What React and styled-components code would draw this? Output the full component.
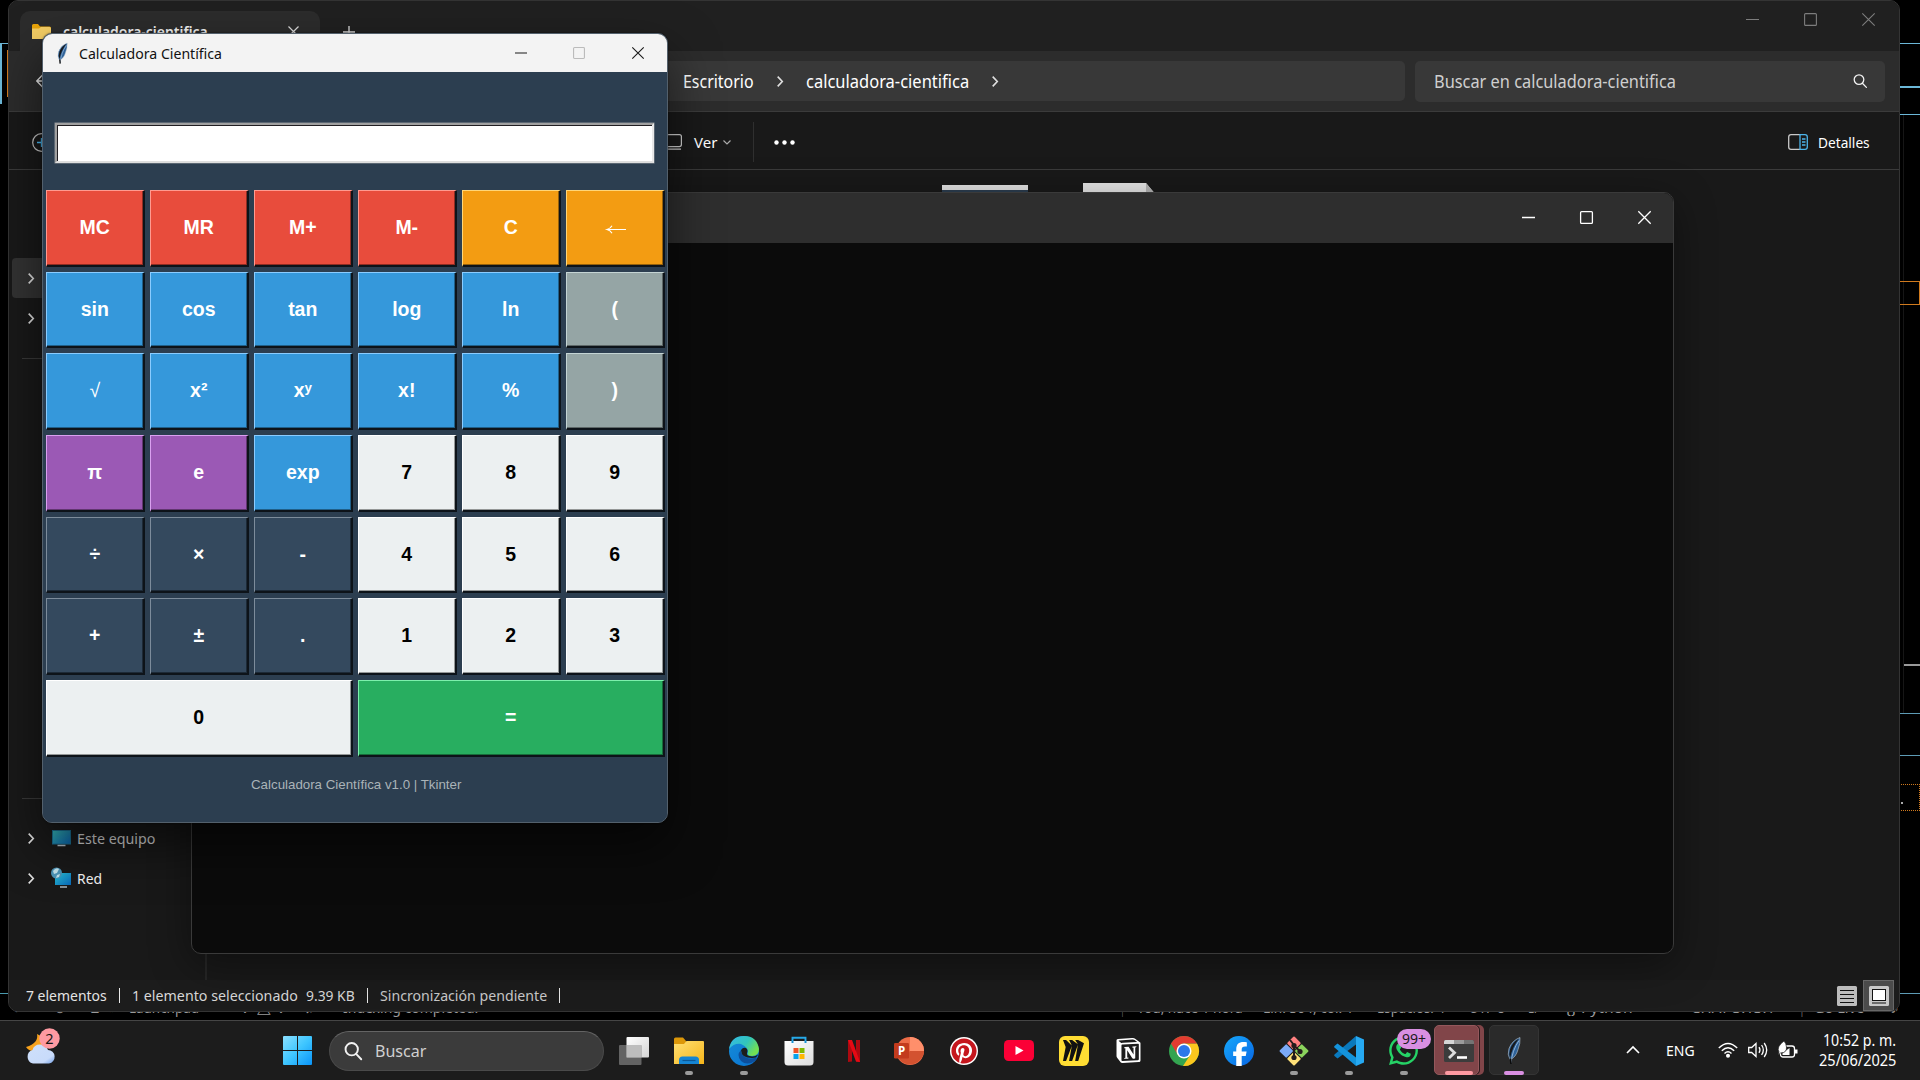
import React, { useLayoutEffect, useRef } from "react";
import styled, { createGlobalStyle } from "styled-components";
import { FaWhatsapp, FaPinterest, FaFacebookF } from "react-icons/fa6";
import { SiMiro, SiNotion } from "react-icons/si";

const Global = createGlobalStyle`
  * { box-sizing: border-box; }
  html, body { margin: 0; background: #000; overflow: hidden; }
  body { font-family: "Noto Sans", "Open Sans", sans-serif; }
  svg { display: block; overflow: visible; }
`;

const Desktop = styled.div`
  position: relative;
  width: 1920px;
  height: 1080px;
  background: #000;
  overflow: hidden;
`;

/* ---------- text with a fixed advance width ---------- */
const FitBox = styled.span`
  display: block;
  flex: none;
  width: ${(p) => p.$w}px;
  font-size: ${(p) => p.$size}px;
  font-weight: ${(p) => p.$weight || 400};
  font-family: ${(p) => p.$font || "inherit"};
  color: ${(p) => p.$color || "#fff"};
  line-height: 20px;
  white-space: nowrap;
`;
const FitInner = styled.span`
  display: inline-block;
  transform-origin: 0 50%;
`;
function Fit({ w, size = 15, weight, color, font, className, children }) {
  const ref = useRef(null);
  useLayoutEffect(() => {
    const el = ref.current;
    if (el && el.offsetWidth) el.style.transform = `scaleX(${w / el.offsetWidth})`;
  }, [w]);
  return (
    <FitBox className={className} $w={w} $size={size} $weight={weight} $color={color} $font={font}>
      <FitInner ref={ref}>{children}</FitInner>
    </FitBox>
  );
}

/* ---------- editor behind the windows ---------- */
const Trace = styled.i`
  position: absolute;
  left: ${(p) => p.$x}px;
  top: ${(p) => p.$y}px;
  width: ${(p) => p.$w}px;
  height: ${(p) => p.$h}px;
  background: ${(p) => p.$c};
`;
const Frame = styled.i`
  position: absolute;
  left: ${(p) => p.$x}px;
  top: ${(p) => p.$y}px;
  width: ${(p) => p.$w}px;
  height: ${(p) => p.$h}px;
  border: 1px ${(p) => p.$line} #d07a1e;
`;
const EditorBar = styled.div`
  position: absolute;
  left: 0;
  top: 998px;
  width: 1920px;
  height: 22px;
  display: flex;
  align-items: flex-start;
`;
const EditorItem = styled.div`
  margin-left: ${(p) => p.$gap}px;
`;
const editorItems = [
  [14, 8, "›"], [32, 12, "⊛"], [24, 10, "⊔"], [9, 6, "»"], [14, 70, "Launchpad"],
  [26, 11, "○"], [7, 4, "0"], [10, 14, "△"], [8, 4, "0"], [22, 9, "♫"], [29, 135, "Indexing completed."],
  [643, 3, "|"], [13, 106, "You, hace 1 hora"], [20, 91, "Lín. 304, col. 1"], [23, 68, "Espacios: 4"],
  [24, 36, "UTF-8"], [23, 12, "LF"], [25, 68, "{} Python"], [22, 16, "○"], [20, 84, "CHAT 3.13.1"],
  [25, 4, "|"], [10, 50, "Go Live"], [26, 9, "♪"],
];

/* ---------- window shells ---------- */
const Window = styled.section`
  position: absolute;
  left: ${(p) => p.$x}px;
  top: ${(p) => p.$y}px;
  width: ${(p) => p.$w}px;
  height: ${(p) => p.$h}px;
  display: flex;
  flex-direction: column;
  overflow: hidden;
  border: 1px solid ${(p) => p.$line};
  border-radius: 10px;
  background: ${(p) => p.$bg};
  box-shadow: ${(p) => p.$shadow || "none"};
`;
const Controls = styled.div`
  display: flex;
  margin-left: auto;
  margin-right: ${(p) => p.$mr || 0}px;
  color: ${(p) => p.$c};
`;
const Control = styled.div`
  width: ${(p) => p.$w || 58}px;
  height: ${(p) => p.$h}px;
  display: grid;
  place-items: center;
  opacity: ${(p) => (p.$dim ? 0.25 : 1)};
`;
function WindowControls({ color, h, w, size, sw, dimMax, mr }) {
  const s = { fill: "none", stroke: "currentColor", strokeWidth: sw };
  return (
    <Controls $c={color} $mr={mr}>
      <Control $h={h} $w={w}><svg width={size} height={size} viewBox="0 0 13 13"><path d="M0 6.5h13" {...s} /></svg></Control>
      <Control $h={h} $w={w} $dim={dimMax}><svg width={size} height={size} viewBox="0 0 13 13"><rect x=".6" y=".6" width="11.8" height="11.8" rx="1" {...s} /></svg></Control>
      <Control $h={h} $w={w}><svg width={size} height={size} viewBox="0 0 13 13"><path d="M.3.3l12.4 12.4M12.7.3.3 12.7" {...s} /></svg></Control>
    </Controls>
  );
}

/* ---------- explorer ---------- */
const TabStrip = styled.header`
  flex: none;
  height: 50px;
  display: flex;
  background: #202020;
  padding-left: 11px;
`;
const Tab = styled.div`
  width: 300px;
  height: 40px;
  margin-top: 10px;
  padding: 0 0 0 12px;
  display: flex;
  align-items: center;
  background: #2c2c2c;
  border-radius: 10px 10px 0 0;
  & > svg:first-child { margin-right: 12px; }
  & > svg:last-child { margin-left: 80px; }
`;
const NewTab = styled.div`
  padding: 25px 0 0 23px;
`;
const AddressRow = styled.div`
  flex: none;
  height: 61px;
  display: flex;
  align-items: center;
  background: #2c2c2c;
  border-bottom: 1px solid #3b3b3b;
  padding: 0 14px 0 27px;
`;
const AddressField = styled.div`
  margin-left: 139px;
  width: 1216px;
  height: 40px;
  display: flex;
  align-items: center;
  gap: 23px;
  padding-left: 494px;
  background: #383838;
  border-radius: 5px;
`;
const SearchField = styled.div`
  margin-left: auto;
  width: 470px;
  height: 41px;
  display: flex;
  align-items: center;
  justify-content: space-between;
  padding: 0 18px 0 19px;
  background: #383838;
  border-radius: 5px;
`;
const CommandBar = styled.div`
  flex: none;
  height: 58px;
  display: flex;
  align-items: center;
  background: #191919;
  border-bottom: 1px solid #3b3b3b;
  padding: 3px 29px 0 23px;
`;
const ViewButton = styled.div`
  margin-left: 609px;
  display: flex;
  align-items: center;
  & > svg:first-child { margin-right: 12px; }
  & > svg:last-child { margin: 0 2px 0 6px; }
`;
const BarLine = styled.i`
  width: 1px;
  height: 40px;
  margin: 0 20px 0 20px;
  background: #2f2f2f;
`;
const DetailsButton = styled.div`
  margin-left: auto;
  display: flex;
  align-items: center;
  gap: 10px;
`;
const ExplorerBody = styled.div`
  flex: 1;
  min-height: 0;
  display: flex;
`;
const Sidebar = styled.nav`
  flex: none;
  width: 198px;
  padding: 88px 0 0 3px;
  display: flex;
  flex-direction: column;
  border-right: 2px solid #262626;
  background: #191919;
`;
const NavRow = styled.div`
  flex: none;
  height: 40px;
  display: flex;
  align-items: center;
  padding-left: 16px;
  border-radius: 4px;
  background: ${(p) => (p.$on ? "#333" : "transparent")};
  & > svg:nth-child(2) { margin: 0 6px 0 18px; }
  & > span { margin-top: -1px; }
`;
const NavLine = styled.i`
  flex: none;
  height: 1px;
  margin: ${(p) => p.$m};
  background: #393939;
`;
const Files = styled.div`
  flex: 1;
  display: flex;
  align-items: flex-start;
  padding: 13px 0 0 735px;
  gap: 54px;
`;
const Preview = styled.div`
  width: 86px;
  height: 60px;
  margin: 2px 1px 0 0;
  border-top: 5px solid #e3e3e3;
  background: #2c3e50;
`;
const StatusBar = styled.footer`
  flex: none;
  height: 31px;
  display: flex;
  align-items: center;
  padding: 0 5px 0 17px;
  background: #1c1c1c;
  & > span { margin-top: -2px; }
`;
const StatusLine = styled.i`
  width: 1px;
  height: 15px;
  margin: 0 12px;
  background: #e8e8e8;
`;
const StatusGap = styled.i`
  width: 8px;
`;
const ViewModes = styled.div`
  margin-left: auto;
  display: flex;
  align-items: center;
  gap: 6px;
`;
const ActiveMode = styled.div`
  width: 31px;
  height: 31px;
  display: grid;
  place-items: center;
  background: #4b4b4b;
  border: 1px solid #686868;
`;

const Chevron = ({ w = 6, h = 11, c = "#e0e0e0", sw = 1.6 }) => (
  <svg width={w} height={h} viewBox="0 0 6 11"><path d="M.7.6l4.6 4.9L.7 10.4" fill="none" stroke={c} strokeWidth={sw} /></svg>
);
const Magnifier = ({ size, sw = 1.3, c = "#f2f2f2" }) => (
  <svg width={size} height={size} viewBox="0 0 14 14" fill="none" stroke={c} strokeWidth={sw} strokeLinecap="round">
    <circle cx="6" cy="5.6" r="4.8" /><path d="M9.4 9.2l4 4.2" />
  </svg>
);

function Explorer() {
  return (
    <Window $x={8} $y={0} $w={1892} $h={1012} $line="#343434" $bg="#191919">
      <TabStrip>
        <Tab>
          <svg width="19" height="15" viewBox="0 0 19 15"><path d="M0 1.5Q0 0 1.5 0H6l2 2.5h9.500q1.500 0 1.500 1.500V7H0z" fill="#eaa50a" /><path d="M0 4.500h7l2-1.500h8.500Q19 3 19 4.500V15H0z" fill="#f6cf65" /></svg>
          <Fit w={145} size={15} weight={600} color="#f4f4f4">calculadora-cientifica</Fit>
          <svg width="11" height="11" viewBox="0 0 11 11"><path d="M.5.5l10 10M10.500.5l-10 10" stroke="#ddd" strokeWidth="1.200" /></svg>
        </Tab>
        <NewTab><svg width="12" height="12" viewBox="0 0 12 12"><path d="M0 6h12M6 0v12" stroke="#ddd" strokeWidth="1.300" /></svg></NewTab>
        <WindowControls color="#7d7d7d" h={36} size={13} sw={1.1} mr={2} />
      </TabStrip>
      <AddressRow>
        <svg width="14" height="14" viewBox="0 0 14 14"><path d="M7 .5.7 7 7 13.500M.7 7H14" fill="none" stroke="#e6e6e6" strokeWidth="1.300" /></svg>
        <AddressField>
          <Fit w={71} size={17.5}>Escritorio</Fit>
          <Chevron />
          <Fit w={163} size={17.5}>calculadora-cientifica</Fit>
          <Chevron />
        </AddressField>
        <SearchField>
          <Fit w={242} size={17.5} color="#cfcfcf">Buscar en calculadora-cientifica</Fit>
          <Magnifier size={14} />
        </SearchField>
      </AddressRow>
      <CommandBar>
        <svg width="19" height="19" viewBox="0 0 19 19" fill="none"><circle cx="9.500" cy="9.500" r="8.800" stroke="#c8c8c8" strokeWidth="1.200" /><path d="M5 9.500h9M9.500 5v9" stroke="#4cc2ff" strokeWidth="1.300" /></svg>
        <ViewButton>
          <svg width="22" height="16" viewBox="0 0 22 16" fill="none" stroke="#cfcfcf" strokeWidth="1.200"><rect x=".6" y=".6" width="20.800" height="12" rx="2" /><path d="M2 15.200h19" /></svg>
          <Fit w={23} size={15}>Ver</Fit>
          <svg width="8" height="5" viewBox="0 0 8 5"><path d="M.5.5 4 4 7.500.5" fill="none" stroke="#aaa" strokeWidth="1.200" /></svg>
        </ViewButton>
        <BarLine />
        <svg width="22" height="5" viewBox="0 0 22 5" fill="#fff"><circle cx="2.500" cy="2.500" r="2.200" /><circle cx="10.500" cy="2.500" r="2.200" /><circle cx="18.500" cy="2.500" r="2.200" /></svg>
        <DetailsButton>
          <svg width="20" height="16" viewBox="0 0 20 16" fill="none" strokeWidth="1.300"><path d="M12 .7H3Q.7.7.7 3v10Q.7 15.300 3 15.300h9" stroke="#c9c9c9" /><path d="M12 .7h5q2.300 0 2.300 2.300v10q0 2.300-2.300 2.300h-5z" stroke="#4cb4ea" /><path d="M14 5h3.500M14 8h3.500M14 11h3.500" stroke="#4cb4ea" /></svg>
          <Fit w={52} size={15}>Detalles</Fit>
        </DetailsButton>
      </CommandBar>
      <ExplorerBody>
        <Sidebar>
          <NavRow $on><Chevron /></NavRow>
          <NavRow><Chevron /></NavRow>
          <NavLine $m="20px 0 0 10px" />
          <NavLine $m="439px 0 19px 10px" />
          <NavRow>
            <Chevron />
            <svg width="19" height="17" viewBox="0 0 19 17"><defs><linearGradient id="pc" x2="1" y2="1"><stop stopColor="#35b5b5" /><stop offset="1" stopColor="#0a62ad" /></linearGradient></defs><rect x=".5" y=".5" width="18" height="13.500" fill="url(#pc)" stroke="#1a6c8f" /><path d="M5.500 15.500h8" stroke="#aebac2" strokeWidth="1.500" /></svg>
            <Fit w={78} size={15} color="#d6d6d6">Este equipo</Fit>
          </NavRow>
          <NavRow>
            <Chevron />
            <svg width="19" height="20" viewBox="0 0 19 20"><defs><linearGradient id="net" x2="1" y2="1"><stop stopColor="#29c2d5" /><stop offset="1" stopColor="#0868bb" /></linearGradient></defs><rect x="3" y="5" width="16" height="12" fill="url(#net)" /><path d="M8 19h7" stroke="#aebac2" strokeWidth="1.500" /><circle cx="4.500" cy="5" r="5.500" fill="#4c95b9" /><path d="M1 3q3-4 6-2L5 5 2 6zM5 7l3-1-1 3-3 1z" fill="#c4e4ee" /></svg>
            <Fit w={25} size={15} color="#f4f4f4">Red</Fit>
          </NavRow>
        </Sidebar>
        <Files>
          <Preview />
          <svg width="73" height="60" viewBox="0 0 73 60"><path d="M0 0h63l10 12v48H0z" fill="#e6e6e6" /><path d="M63 0l10 12H63z" fill="#b5b5b5" /></svg>
        </Files>
      </ExplorerBody>
      <StatusBar>
        <Fit w={81} size={15} color="#e4e4e4">7 elementos</Fit>
        <StatusLine />
        <Fit w={166} size={15} color="#d8d8d8">1 elemento seleccionado</Fit>
        <StatusGap />
        <Fit w={49} size={15} color="#d8d8d8">9.39 KB</Fit>
        <StatusLine />
        <Fit w={167} size={15} color="#c9c9c9">Sincronización pendiente</Fit>
        <StatusLine />
        <ViewModes>
          <svg width="20" height="20" viewBox="0 0 20 20"><rect width="20" height="20" rx="1.500" fill="#bdbdbd" /><path d="M3 4.500h14M3 8.500h14M3 12.500h14M3 16.500h14" stroke="#111" /></svg>
          <ActiveMode><svg width="20" height="20" viewBox="0 0 20 20"><rect width="20" height="20" rx="1.500" fill="#c8c8c8" /><rect x="3.500" y="3.500" width="13" height="11" fill="#fff" stroke="#111" /><path d="M3 17h14" stroke="#111" /></svg></ActiveMode>
        </ViewModes>
      </StatusBar>
    </Window>
  );
}

/* ---------- terminal ---------- */
const TerminalBar = styled.header`
  flex: none;
  height: 50px;
  display: flex;
  background: #2e2e2e;
`;

/* ---------- calculator ---------- */
const CalcBar = styled.header`
  flex: none;
  height: 38px;
  display: flex;
  align-items: center;
  background: #f3f3f3;
  padding-left: 14px;
  & > svg { margin-right: 11px; }
  & > span { margin-top: -1px; }
`;
const CalcBody = styled.div`
  flex: 1;
  display: flex;
  flex-direction: column;
  padding: 51px 2px 0 3px;
  background: #2c3e50;
`;
const Entry = styled.div`
  flex: none;
  height: 40px;
  margin: 0 11px 27px 9px;
  background: #fff;
  border: 2px solid;
  border-color: #a0a0a0 #e8e8e8 #dedede #a0a0a0;
  box-shadow: inset 1px 1px 0 #201e22, 0 0 0 .5px #8a8f95;
`;
const Keys = styled.div`
  display: grid;
  grid-template-columns: repeat(6, 98.500px);
  grid-auto-rows: 76.500px;
  column-gap: 5.500px;
  row-gap: 5.200px;
`;
const tones = {
  red: ["#e84c3c", "#ff9a90", "#8e2c22", "#fff"],
  orange: ["#f39c12", "#ffd678", "#94600b", "#fff"],
  blue: ["#3598db", "#8accff", "#205f88", "#fff"],
  gray: ["#95a5a5", "#c4d4d4", "#5d6767", "#fff"],
  violet: ["#9b59b5", "#daa0f0", "#613670", "#fff"],
  navy: ["#34495e", "#7d8c9b", "#1d2a37", "#fff"],
  white: ["#ecf0f1", "#ffffff", "#949797", "#000"],
  green: ["#28ae60", "#7df0ac", "#186c3b", "#fff"],
};
const Key = styled.button`
  grid-column: span ${(p) => p.$span || 1};
  padding: 0;
  border: solid;
  border-width: 1px 2px 2px 1px;
  border-color: ${(p) => tones[p.$t][1]} #0d1319 #0d1319 ${(p) => tones[p.$t][1]};
  box-shadow: inset -1px -1px 0 ${(p) => tones[p.$t][2]};
  background: ${(p) => tones[p.$t][0]};
  color: ${(p) => tones[p.$t][3]};
  font: ${(p) => (p.$thin ? 400 : 700)} 19.5px/1 "Liberation Sans", "DejaVu Sans", sans-serif;
`;
const Arrow = () => (
  <svg width="20" height="9" viewBox="0 0 20 9"><path d="M20 4.500H1.500M6 .8Q4.500 3.500 1 4.500q3.500 1 5 3.700" fill="none" stroke="#fff" strokeWidth="1.200" /></svg>
);
const ArrowSpot = styled.span`
  display: flex;
  justify-content: center;
  padding: 3px 0 0 2px;
`;
const keys = [
  ["MC", "red"], ["MR", "red"], ["M+", "red"], ["M-", "red"], ["C", "orange"], ["←", "orange"],
  ["sin", "blue"], ["cos", "blue"], ["tan", "blue"], ["log", "blue"], ["ln", "blue"], ["(", "gray"],
  ["√", "blue", 1, true], ["x²", "blue"], ["xʸ", "blue"], ["x!", "blue"], ["%", "blue"], [")", "gray"],
  ["π", "violet"], ["e", "violet"], ["exp", "blue"], ["7", "white"], ["8", "white"], ["9", "white"],
  ["÷", "navy"], ["×", "navy"], ["-", "navy"], ["4", "white"], ["5", "white"], ["6", "white"],
  ["+", "navy"], ["±", "navy"], [".", "navy"], ["1", "white"], ["2", "white"], ["3", "white"],
  ["0", "white", 3], ["=", "green", 3],
];
const Credit = styled.div`
  display: flex;
  justify-content: center;
  margin-top: 18px;
`;
const Feather = ({ w, h }) => (
  <svg width={w} height={h} viewBox="0 0 14 27">
    <path d="M13 0Q5 3 2 11 0 17 3 22 9 20 11 12 13.500 6 13 0z" fill="#2f6298" stroke="#b7c4d0" strokeWidth=".6" />
    <path d="M12 1Q5 5 3 12 1.500 17 3 21 5 10 12 1z" fill="#17191c" />
    <path d="M12 3Q5 13 4 26" fill="none" stroke="#a9c8e8" strokeWidth=".8" />
    <path d="M3.500 21l.5 5.500" stroke="#090909" strokeWidth="1.700" />
  </svg>
);
function Calculator() {
  return (
    <Window $x={42} $y={33} $w={626} $h={790} $line="#53606c" $bg="#2c3e50" $shadow="0 0 2px rgba(0,0,0,.6), 0 22px 50px rgba(0,0,0,.55)">
      <CalcBar>
        <Feather w={11} h={21} />
        <Fit w={143} size={15} color="#111">Calculadora Científica</Fit>
        <WindowControls color="#1a1a1a" h={38} w={58.5} size={12} sw={1.2} dimMax />
      </CalcBar>
      <CalcBody>
        <Entry />
        <Keys>
          {keys.map(([k, t, span, thin]) => (
            <Key key={k} $t={t} $span={span} $thin={thin}>{k === "←" ? <ArrowSpot><Arrow /></ArrowSpot> : k}</Key>
          ))}
        </Keys>
        <Credit><Fit w={210} size={13.5} font='"Liberation Sans", sans-serif' color="#aab3b8">Calculadora Científica v1.0 | Tkinter</Fit></Credit>
      </CalcBody>
    </Window>
  );
}

/* ---------- taskbar ---------- */
const Taskbar = styled.footer`
  position: absolute;
  left: 0;
  bottom: 0;
  width: 1920px;
  height: 60px;
  display: flex;
  align-items: center;
  background: #1c1c1c;
  border-top: 1px solid #454545;
`;
const Widgets = styled.div`
  width: 283px;
  padding: 0 0 9px 26px;
`;
const SearchPill = styled.div`
  width: 275px;
  height: 40px;
  margin: 0 2px 0 17px;
  display: flex;
  align-items: center;
  gap: 13px;
  padding-left: 14px;
  border-radius: 20px;
  background: #3b3b3b;
  border: 1px solid #4a4a4a;
  border-top-color: #646464;
`;
const Slot = styled.div`
  position: relative;
  width: 55px;
  height: 59px;
  display: grid;
  place-items: center;
`;
const Tile = styled.div`
  position: absolute;
  inset: ${(p) => (p.$hot ? "4px 7px 5px 2.5px" : "4px 2.5px 5px")};
  border-radius: 5px;
  background: ${(p) => (p.$hot ? "#814549" : "#2a2a2a")};
  border: 1px solid ${(p) => (p.$hot ? "#94585c" : "#343434")};
  box-shadow: ${(p) => (p.$hot ? "1px 0 0 #2c1a1c, 5px 0 0 #814549" : "none")};
`;
const Glyph = styled.div`
  position: relative;
  width: 30px;
  height: 30px;
  display: grid;
  place-items: center;
  place-content: center;
  font-size: 28px;
`;
const Running = styled.i`
  position: absolute;
  left: calc(50% - ${(p) => p.$w / 2}px);
  bottom: 5px;
  width: ${(p) => p.$w}px;
  height: 4px;
  border-radius: 2px;
  background: ${(p) => p.$c || "#9b9b9b"};
`;
const Badge = styled.div`
  position: absolute;
  left: 21px;
  top: 8px;
  width: 34px;
  height: 20px;
  display: grid;
  place-items: center;
  border-radius: 10px;
  background: #d98fe2;
`;
const Round = styled.div`
  width: 28px;
  height: 28px;
  border-radius: 50%;
  display: grid;
  place-items: center;
  background: ${(p) => p.$bg};
  color: ${(p) => p.$fg};
  font-size: ${(p) => p.$fs}px;
`;
const MiroTile = styled.div`
  width: 30px;
  height: 30px;
  display: grid;
  place-items: center;
  border-radius: 6px;
  background: #ffdd33;
  color: #111;
  font-size: 21px;
`;

const art = {
  task: <svg width="30" height="28" viewBox="0 0 30 28"><defs><linearGradient id="tv" x2="1" y2="1"><stop stopColor="#fff" /><stop offset="1" stopColor="#d5d5d5" /></linearGradient></defs><rect x="7.500" width="22.500" height="20.500" rx="1" fill="url(#tv)" /><rect y="8" width="22.500" height="20" rx="1" fill="#777" opacity=".78" /><rect x="7.500" y="8" width="15" height="12.500" fill="#bdbdbd" /></svg>,
  folder: <svg width="30" height="28" viewBox="0 0 30 28"><defs><linearGradient id="fo" x2="1" y2="1"><stop stopColor="#ffe074" /><stop offset="1" stopColor="#f6b51a" /></linearGradient></defs><path d="M0 2q0-1.500 1.500-1.500H9L12 4v5H0z" fill="#dc9709" /><path d="M0 7h10l2.500-3H29q1 0 1 1v22H0z" fill="url(#fo)" /><path d="M5 27v-4q0-3.500 3.500-3.500h13q3.500 0 3.500 3.500v4z" fill="#1685d3" /><path d="M8.500 23.500h13" stroke="#0b5796" strokeWidth="1.200" /></svg>,
  edge: <svg width="30" height="30" viewBox="0 0 30 30"><defs><linearGradient id="e1" x2="1" y2=".5"><stop stopColor="#35b9e9" /><stop offset=".6" stopColor="#32c5bb" /><stop offset="1" stopColor="#73e052" /></linearGradient><linearGradient id="e2" y2="1"><stop stopColor="#168cd8" /><stop offset="1" stopColor="#0872d0" /></linearGradient></defs><circle cx="15" cy="15" r="15" fill="url(#e2)" /><path d="M0 13Q2 0 15 0 28 0 30 13q0 7-7 7-6 0-4-4 0-5-7-8Q5 7 0 13z" fill="url(#e1)" /><path d="M12 14q-5 5 0 11 6 5 14 0Q29 22 27 21 22 24 16 21 11 18 12 14z" fill="#0d4f9c" /><path d="M12 14q3-4 6-1 1 2 0 4-1 3 5 3.500 3 .3 6-2Q28 22 23 22 12 22 12 14z" fill="#1c1c1c" /></svg>,
  store: <svg width="30" height="30" viewBox="0 0 30 30"><defs><linearGradient id="st" y2="1"><stop stopColor="#fff" /><stop offset="1" stopColor="#dcdcdc" /></linearGradient></defs><path d="M8.500 6V1.700h13V6" fill="none" stroke="#26a9e8" strokeWidth="1.900" /><path d="M.5 5h29v21q0 3.500-3.500 3.500H4Q.5 29.500.5 26z" fill="url(#st)" /><path d="M8.500 5v2M21.500 5v2" stroke="#1791d4" strokeWidth="2" /><path d="M9.500 12h5v5h-5z" fill="#ee5325" /><path d="M15.500 12h5v5h-5z" fill="#80b900" /><path d="M9.500 18h5v5h-5z" fill="#05a3ed" /><path d="M15.500 18h5v5h-5z" fill="#ffb701" /></svg>,
  netflix: <svg width="12" height="22" viewBox="0 0 12 22"><path d="M0 0h4v21.500L0 22zM8 0h4v22l-4-.5z" fill="#ae0910" /><path d="M0 0h4l8 22-4-.5z" fill="#e60914" /></svg>,
  ppt: <svg width="30" height="28" viewBox="0 0 30 28"><circle cx="16" cy="14" r="14" fill="#ed6c47" /><path d="M16 0a14 14 0 0 1 14 14H16z" fill="#ff8f6b" /><path d="M30 14A14 14 0 0 1 5 22l11-8z" fill="#d35230" /><rect y="6" width="15" height="15.500" rx="1.200" fill="#c33b1d" /><text x="7.500" y="17.800" textAnchor="middle" fontFamily="Open Sans, sans-serif" fontWeight="700" fontSize="11.500" fill="#fff">P</text></svg>,
  pinterest: <Round $bg="#fff" $fg="#c5161d" $fs={26}><FaPinterest /></Round>,
  youtube: <svg width="30" height="21" viewBox="0 0 30 21"><rect width="30" height="21" rx="4.500" fill="#fb0036" /><path d="M11.500 6l8 4.500-8 4.500z" fill="#fff" /></svg>,
  miro: <MiroTile><SiMiro /></MiroTile>,
  notion: <Round $bg="transparent" $fg="#fff" $fs={25}><SiNotion /></Round>,
  chrome: <svg width="30" height="30" viewBox="0 0 30 30"><circle cx="15" cy="15" r="15" fill="#33a450" /><path d="M15 7.500h13A15 15 0 0 1 14 30l7.500-11.500z" fill="#fcc71d" /><path d="M2 7.500A15 15 0 0 1 15 0a15 15 0 0 1 13 7.500H15a7.500 7.500 0 0 0-6.500 11z" fill="#e33c30" /><circle cx="15" cy="15" r="7.500" fill="#fff" /><circle cx="15" cy="15" r="6" fill="#2c77ea" /></svg>,
  facebook: <svg width="30" height="30" viewBox="0 0 30 30"><defs><linearGradient id="fb" y2="1"><stop stopColor="#16a9fb" /><stop offset="1" stopColor="#0865e4" /></linearGradient></defs><circle cx="15" cy="15" r="15" fill="url(#fb)" /><FaFacebookF x="4" y="6" color="#fff" size={24} /></svg>,
  git: <svg width="30" height="30" viewBox="0 0 30 30"><g transform="rotate(45 15 15)"><rect x="4.500" y="4.500" width="10" height="10" rx="1" fill="#ff8080" /><rect x="15.500" y="4.500" width="10" height="10" rx="1" fill="#8bd35c" /><rect x="4.500" y="15.500" width="10" height="10" rx="1" fill="#7baaf7" /><rect x="15.500" y="15.500" width="10" height="10" rx="1" fill="#ffe178" /></g><path d="M11 4l4 5v14M15 10l6 5" stroke="#241c1c" strokeWidth="2" fill="none" /><circle cx="15" cy="9.500" r="2.600" fill="#241c1c" /><circle cx="15" cy="21.500" r="2.600" fill="#241c1c" /><circle cx="21" cy="15.500" r="2.600" fill="#241c1c" /></svg>,
  code: <svg width="30" height="30" viewBox="0 0 30 30"><path d="M22 0l8 3.500v23L22 30z" fill="#26a9f2" /><path d="M22 0v8.500L3.500 22.500.5 20q-.8-.8 0-1.600z" fill="#0a79bd" /><path d="M.5 10l3-2.500L22 21.500V30L.5 11.600Q-.3 10.800.5 10z" fill="#1493db" /></svg>,
  whatsapp: <FaWhatsapp color="#25d366" size={33} />,
  terminal: <svg width="30" height="22" viewBox="0 0 30 22"><rect width="30" height="22" rx="1.500" fill="#3c3c3c" /><path d="M0 1.500Q0 0 1.500 0H10v4H0z" fill="#d5d5d5" /><path d="M10 0h10v4H10z" fill="#9b9b9b" /><path d="M20 0h8.500Q30 0 30 1.500V4H20z" fill="#747474" /><path d="M5 7.500l5.500 5.200L5 18" fill="none" stroke="#ddd" strokeWidth="2.800" /><path d="M13 17.500h10" stroke="#fff" strokeWidth="2.600" /></svg>,
  feather: <Feather w={14} h={28} />,
};
const apps = [
  ["task"], ["folder", 8], ["edge", 8], ["store"], ["netflix"], ["ppt"], ["pinterest"], ["youtube"], ["miro"], ["notion"],
  ["chrome"], ["facebook"], ["git", 8], ["code", 8], ["whatsapp", 8], ["terminal", 28, "#ff9aa2"], ["feather", 20, "#d98fe2"],
];
const Tray = styled.div`
  margin-left: auto;
  display: flex;
  align-items: center;
  padding: 0 24px 2px 0;
`;
const TrayIcons = styled.div`
  display: flex;
  align-items: center;
  gap: 10px;
  margin: 0 21px 0 23px;
`;
const Clock = styled.div`
  width: 77px;
  display: flex;
  flex-direction: column;
  align-items: flex-end;
`;
const EngGap = styled.i`
  width: 26px;
`;

function TaskbarView() {
  return (
    <Taskbar>
      <Widgets>
        <svg width="35" height="36" viewBox="0 0 35 36">
          <defs><linearGradient id="cl" y2="1"><stop stopColor="#cfe0fb" /><stop offset=".75" stopColor="#c8dbfa" /><stop offset="1" stopColor="#6e9ce4" /></linearGradient></defs>
          <path d="M11 6Q13 15 0 19q4 6 12 3l8-6Q17 8 11 6z" fill="#f7a21c" />
          <path d="M7 35.500a7 7 0 0 1-.5-13.500Q8 16.500 14 16.500t8 5.500a6.800 6.800 0 0 1 1 13.500z" fill="url(#cl)" />
          <circle cx="23.500" cy="10.500" r="10.200" fill="#ff9aa2" />
          <text x="23.500" y="15.800" textAnchor="middle" fontFamily="Noto Sans, sans-serif" fontSize="14.500" fill="#161616">2</text>
        </svg>
      </Widgets>
      <svg width="29" height="29" viewBox="0 0 29 29"><defs><linearGradient id="win" x2="1" y2="1"><stop stopColor="#8be0ff" /><stop offset=".5" stopColor="#3fc6ff" /><stop offset="1" stopColor="#0a94f8" /></linearGradient></defs><path d="M1 0h13v14H0V1Q0 0 1 0zM15 0h13q1 0 1 1v13H15zM0 15h14v14H1q-1 0-1-1zM15 15h14v13q0 1-1 1H15z" fill="url(#win)" /></svg>
      <SearchPill>
        <Magnifier size={18} sw={1.5} />
        <Fit w={51} size={17} color="#d0d0d0">Buscar</Fit>
      </SearchPill>
      {apps.map(([name, w, c]) => (
        <Slot key={name}>
          {(name === "terminal" || name === "feather") && <Tile $hot={name === "terminal"} />}
          <Glyph>{art[name]}</Glyph>
          {w && <Running $w={w} $c={c} />}
          {name === "whatsapp" && <Badge><Fit w={24} size={14} color="#1b1b1b">99+</Fit></Badge>}
        </Slot>
      ))}
      <Tray>
        <svg width="14" height="8" viewBox="0 0 14 8"><path d="M1 7l6-6 6 6" fill="none" stroke="#fff" strokeWidth="1.600" /></svg>
        <EngGap />
        <Fit w={29} size={14.5}>ENG</Fit>
        <TrayIcons>
          <svg width="20" height="16" viewBox="0 0 20 16" fill="none" stroke="#fff" strokeWidth="1.400"><path d="M.8 6q9.200-9 18.400 0M3.800 8.800q6.200-6 12.400 0M6.500 11.500q3.500-3.400 7 0" /><circle cx="10" cy="13.700" r="1.300" fill="#fff" /></svg>
          <svg width="20" height="16" viewBox="0 0 20 16" fill="none" stroke="#fff" strokeWidth="1.300"><path d="M.7 5.500h3L8 1.500v13l-4.300-4h-3z" /><path d="M11 5.200q2 2.800 0 5.600M13.600 3q3.500 5 0 10M16.200 1q5 7 0 14" /></svg>
          <svg width="20" height="16" viewBox="0 0 20 16"><rect x="2.500" y="4" width="14" height="11" rx="2.500" fill="none" stroke="#fff" strokeWidth="1.300" /><path d="M4.500 11l7-5v7H4.500zM17 7.500h2.500v4H17z" fill="#fff" /><path d="M6-1Q-2 5 1 10l-1 3 2.500-2Q9 11 8.500 5 8 1 6-1z" fill="#fff" stroke="#1c1c1c" strokeWidth=".7" /></svg>
        </TrayIcons>
        <Clock>
          <Fit w={73} size={15.500}>10:52 p. m.</Fit>
          <Fit w={77} size={15.500}>25/06/2025</Fit>
        </Clock>
      </Tray>
    </Taskbar>
  );
}

export default function App() {
  return (
    <Desktop>
      <Global />
      <Trace $x={0} $y={43} $w={9} $h={1} $c="#6cb8d8" />
      <Trace $x={0} $y={43} $w={2} $h={61} $c="#6cb8d8" />
      <Trace $x={0} $y={993} $w={9} $h={1} $c="#4a9aae" />
      <Frame $x={7} $y={50} $w={30} $h={47} $line="solid" />
      <Trace $x={1899} $y={43} $w={21} $h={1} $c="#6cb8d8" />
      <Trace $x={1899} $y={86} $w={21} $h={2} $c="#6cb8d8" />
      <Trace $x={1899} $y={114} $w={21} $h={1} $c="#6cb8d8" />
      <Trace $x={1903} $y={115} $w={1} $h={598} $c="#161616" />
      <Frame $x={1890} $y={281} $w={30} $h={24} $line="solid" />
      <Trace $x={1904} $y={664} $w={16} $h={2} $c="#9a9a9a" />
      <Trace $x={1899} $y={713} $w={21} $h={1} $c="#5d9bb5" />
      <Trace $x={1899} $y={755} $w={21} $h={1} $c="#5d9bb5" />
      <Trace $x={1899} $y={993} $w={21} $h={1} $c="#5d9bb5" />
      <Frame $x={1890} $y={784} $w={30} $h={27} $line="dotted" />
      <Trace $x={1901} $y={802} $w={2} $h={2} $c="#aaa" />
      <EditorBar>
        {editorItems.map(([gap, w, t], i) => (
          <EditorItem key={i} $gap={gap}><Fit w={w} size={14} color="#9a9a9a">{t}</Fit></EditorItem>
        ))}
      </EditorBar>
      <Explorer />
      <Window $x={191} $y={192} $w={1483} $h={762} $line="#3a3a3a" $bg="#0b0b0b" $shadow="0 10px 40px rgba(0,0,0,.4)">
        <TerminalBar><WindowControls color="#fff" h={49} size={13} sw={1.3} /></TerminalBar>
      </Window>
      <Calculator />
      <TaskbarView />
    </Desktop>
  );
}
